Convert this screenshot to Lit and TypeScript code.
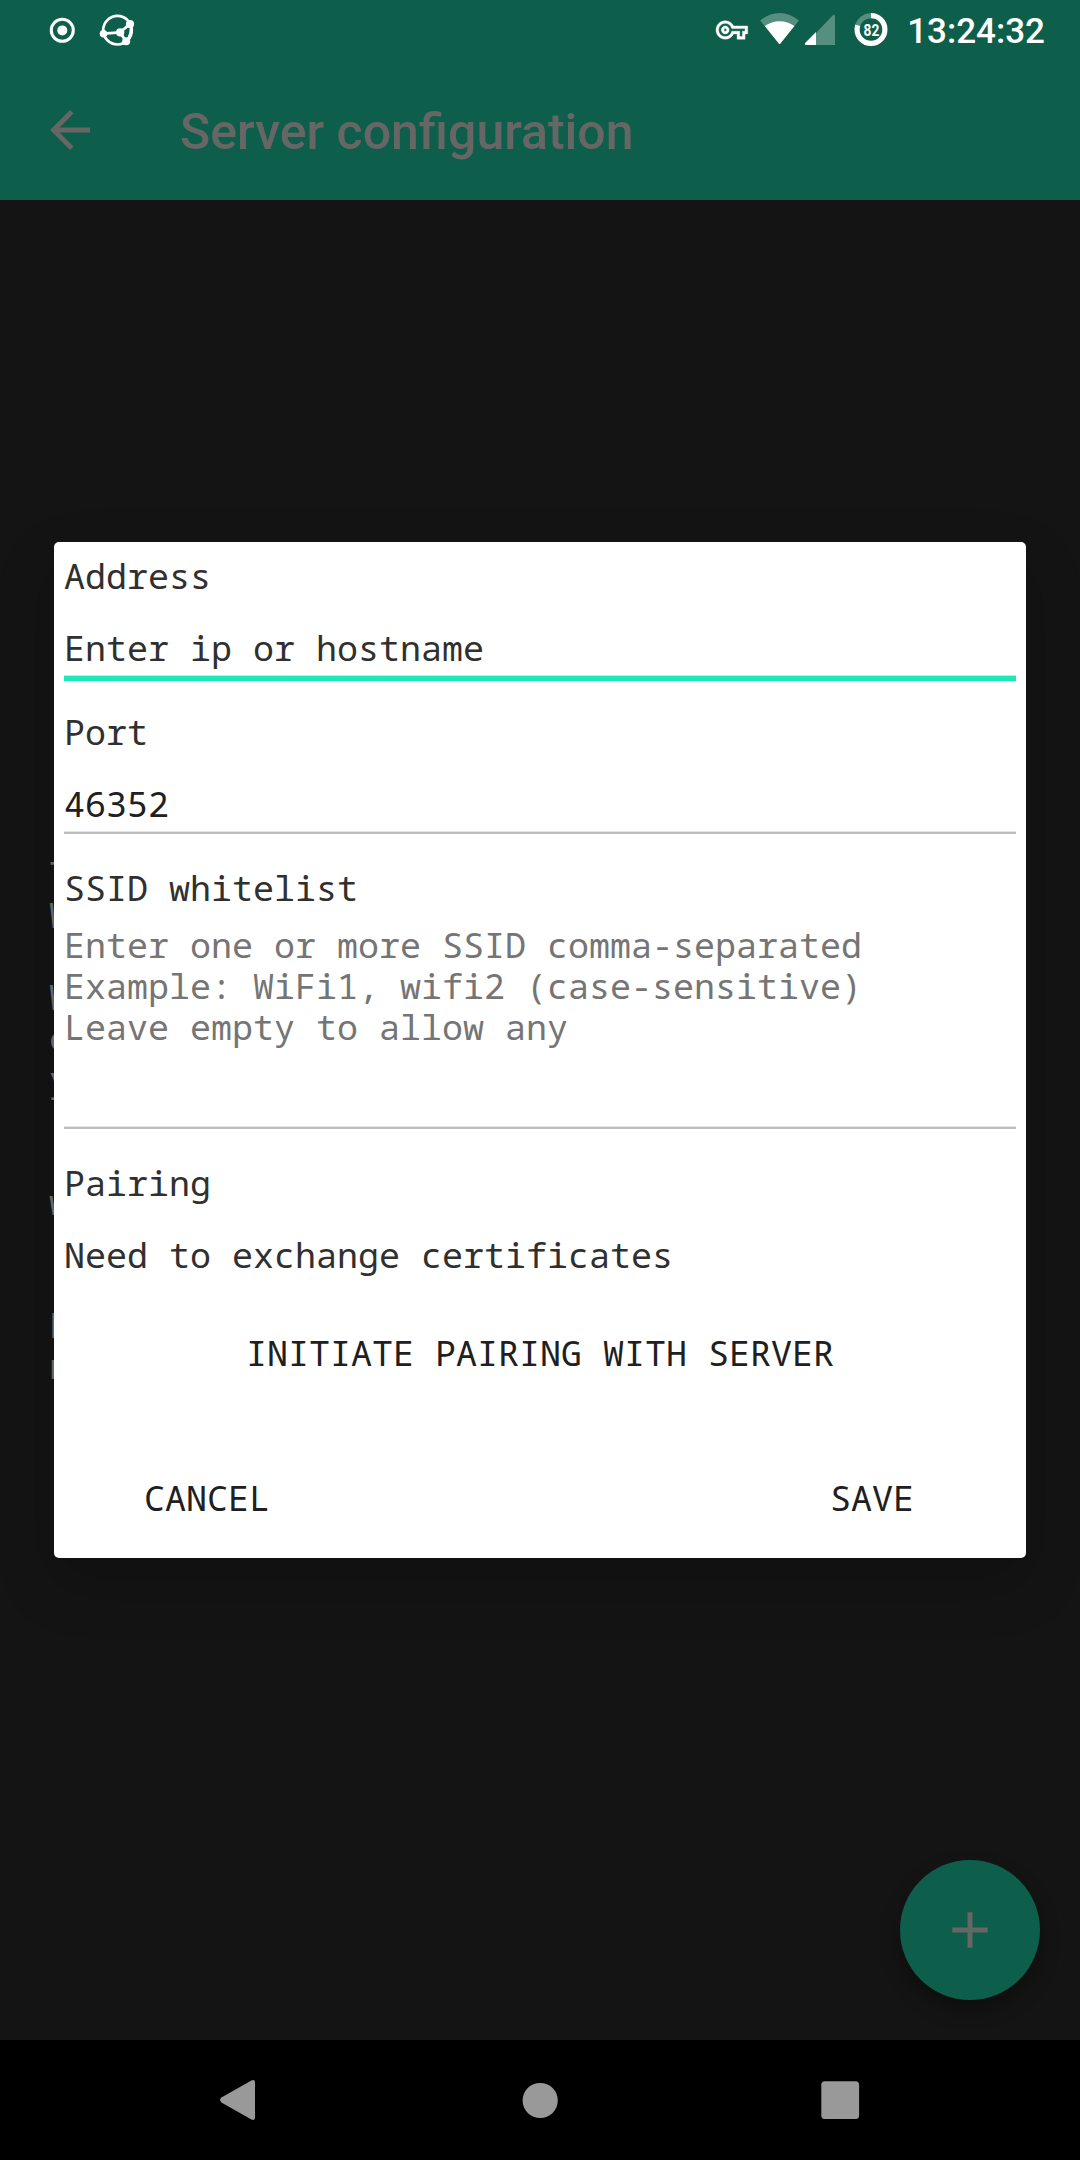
import { LitElement, html, css } from "lit";
import { customElement } from "lit/decorators.js";

@customElement("status-bar")
class StatusBar extends LitElement {
  static styles = css`
    :host { display: block; height: 60px; color: #fff; }
    .bar { display: flex; height: 60px; padding: 0 35px 0 48px; justify-content: space-between; }
    .group { display: flex; height: 60px; align-items: flex-start; }
    .icons { display: block; flex: none; height: 60px; }
    .clock { font: 500 35px/60px Roboto, sans-serif; margin: 2px 0 0 18px; white-space: nowrap; }
    .level { font: 700 17px Roboto, sans-serif; }
  `;

  render() {
    return html`
      <div class="bar">
        <div class="group">
          <svg class="icons" width="90" viewBox="48 0 90 60" fill="#fff">
            <circle cx="62.3" cy="30.3" r="11" fill="none" stroke="#fff" stroke-width="3.1"/>
            <circle cx="62.3" cy="30.4" r="5"/>
            <g fill="none" stroke="#fff">
              <circle cx="117.5" cy="30.2" r="14.3" stroke-width="2.7"/>
              <path d="M103.5 33.7 120 32.4 130 24M120 32.4 126 41.3" stroke-width="2.8"/>
              <path d="M130.8 25Q132.5 34 126.5 42" stroke-width="3"/>
            </g>
            <circle cx="103.5" cy="33.7" r="3.8"/>
            <circle cx="130" cy="24" r="4.1"/>
            <circle cx="126.2" cy="41.3" r="4"/>
            <circle cx="120.2" cy="32.4" r="4.1"/>
          </svg>
        </div>
        <div class="group">
          <svg class="icons" width="174" viewBox="715 0 174 60" fill="#fff">
            <path stroke="#fff" stroke-width=".3" transform="translate(716 14.1) scale(1.32)" d="M22 19h-6v-4h-2.68c-1.14 2.42-3.6 4-6.32 4-3.86 0-7-3.14-7-7s3.14-7 7-7c2.72 0 5.17 1.58 6.32 4H24v6h-2v4zm-4-2h2v-4h2v-2H11.94l-.23-.67C11.01 8.34 9.11 7 7 7c-2.76 0-5 2.24-5 5s2.24 5 5 5c2.11 0 4.01-1.34 4.71-3.33l.23-.67H18v4zM7 15c-1.65 0-3-1.35-3-3s1.35-3 3-3 3 1.35 3 3-1.35 3-3 3zm0-4c-.55 0-1 .45-1 1s.45 1 1 1 1-.45 1-1-.45-1-1-1z"/>
            <path opacity=".3" d="M760.2 20.6Q769 13 779.6 13T799 20.6L780.4 43.4Q779.6 44.4 778.8 43.4Z"/>
            <path d="M764.8 26Q771.5 21.3 779.6 21.3T794.4 26L780.4 43.4Q779.6 44.4 778.8 43.4Z"/>
            <path opacity=".3" d="M816 45V33L832.6 15.4Q835 13.8 835 16.6V45Z"/>
            <path d="M816 45H806Q804 44.6 805.4 42.8L816 32Z"/>
            <g fill="none" stroke-width="5.2" transform="rotate(-90 871 29.5)">
              <circle cx="871" cy="29.5" r="13.9" stroke="#fff" stroke-opacity=".3" pathLength="100" stroke-dasharray="20 80" stroke-dashoffset="20"/>
              <circle cx="871" cy="29.5" r="13.9" stroke="#fff" pathLength="100" stroke-dasharray="80 20"/>
            </g>
            <text class="level" x="863.5" y="36.2" textLength="15.8" lengthAdjust="spacingAndGlyphs">82</text>
          </svg>
          <span class="clock">13:24:32</span>
        </div>
      </div>`;
  }
}

@customElement("server-dialog")
class ServerDialog extends LitElement {
  static styles = css`
    :host {
      display: flex; flex-direction: column; box-sizing: border-box;
      width: 972px; height: 1016px; padding: 13px 10px 0;
      background: #fff; border-radius: 5px;
      box-shadow: 0 24px 60px rgba(0, 0, 0, .2);
      font: 35px/41px "Droid Sans Mono", "Noto Sans Mono", "DejaVu Sans Mono", monospace;
      color: #303030; white-space: pre;
    }
    .label { height: 41px; }
    .field { height: 41px; margin-top: 31px; }
    .value { color: #202020; }
    .line { height: 2px; background: #bdbdbd; border-top: 1px solid #e4e4e4; }
    .under { margin: 7px 0 33px; }
    .focus { height: 5px; background: #1de9b6; border-top: 1px solid #a5f6e2; margin: 7px 0 30px; }
    .hint { height: 123px; margin-top: 16px; color: #757575; }
    .hint-line { margin: 79px 0 33px; }
    .pair { margin-top: 57px; text-align: center; color: #202020; }
    .actions { display: flex; justify-content: space-between; margin-top: 104px; padding: 0 102px 0 80px; color: #202020; }
  `;

  render() {
    return html`
      <div class="label">Address</div>
      <div class="field">Enter ip or hostname</div>
      <div class="focus"></div>
      <div class="label">Port</div>
      <div class="field value">46352</div>
      <div class="line under"></div>
      <div class="label">SSID whitelist</div>
      <div class="hint">${"Enter one or more SSID comma-separated\nExample: WiFi1, wifi2 (case-sensitive)\nLeave empty to allow any"}</div>
      <div class="line hint-line"></div>
      <div class="label">Pairing</div>
      <div class="field">Need to exchange certificates</div>
      <div class="pair">INITIATE PAIRING WITH SERVER</div>
      <div class="actions"><span>CANCEL</span><span>SAVE</span></div>`;
  }
}

@customElement("app-root")
class AppRoot extends LitElement {
  static styles = css`
    :host { display: block; width: 1080px; height: 2160px; overflow: hidden; }
    .screen { display: flex; flex-direction: column; position: relative; height: 2160px; background: #141414; }
    .top { height: 200px; background: #0d5e4a; }
    .appbar { display: flex; align-items: center; height: 140px; color: #666; }
    .back { display: block; margin-left: 50px; }
    .title { margin: 4px 0 0 90px; font: 500 50px/60px Roboto, sans-serif; white-space: nowrap; }
    .content { flex: 1; padding: 653px 0 0 49px; }
    .behind {
      margin: 0; color: #707070; white-space: pre;
      font: 35px/41px "Droid Sans Mono", "Noto Sans Mono", "DejaVu Sans Mono", monospace;
    }
    .dialog { position: absolute; left: 54px; top: 542px; }
    .fab {
      position: absolute; left: 900px; top: 1860px; width: 140px; height: 140px;
      border-radius: 50%; background: #0d5e4a; box-shadow: 0 10px 20px rgba(0, 0, 0, .3);
    }
    .nav { height: 120px; background: #000; }
    .keys { display: block; }
  `;

  render() {
    return html`
      <div class="screen">
        <div class="top">
          <status-bar></status-bar>
          <div class="appbar">
            <svg class="back" width="40" height="40" viewBox="0 0 40 40" fill="none" stroke="#666" stroke-width="5"><path d="M40 20H4M21.8 1.8 3.6 20 21.8 38.2"/></svg>
            <div class="title">Server configuration</div>
          </div>
        </div>
        <div class="content">
          <p class="behind">${"T\nW\n\nW\ne\ny\n\n\nw\n\n\nE\nn"}</p>
        </div>
        <div class="nav">
          <svg class="keys" width="1080" height="120" viewBox="0 0 1080 120" fill="#999">
            <path d="M221.4 57.6 251.4 40.5Q255 39 255 42.5V77.5Q255 81 251.4 79.5L221.4 62.4Q218.6 60 221.4 57.6Z"/>
            <circle cx="540.2" cy="60.5" r="17.6"/>
            <rect x="821.3" y="41.2" width="37.8" height="37.8" rx="3.5"/>
          </svg>
        </div>
        <div class="fab">
          <svg width="140" height="140" viewBox="0 0 140 140" stroke="#666" stroke-width="5"><path d="M52.3 70H87.7M70 52.3V87.7"/></svg>
        </div>
        <server-dialog class="dialog"></server-dialog>
      </div>`;
  }
}
